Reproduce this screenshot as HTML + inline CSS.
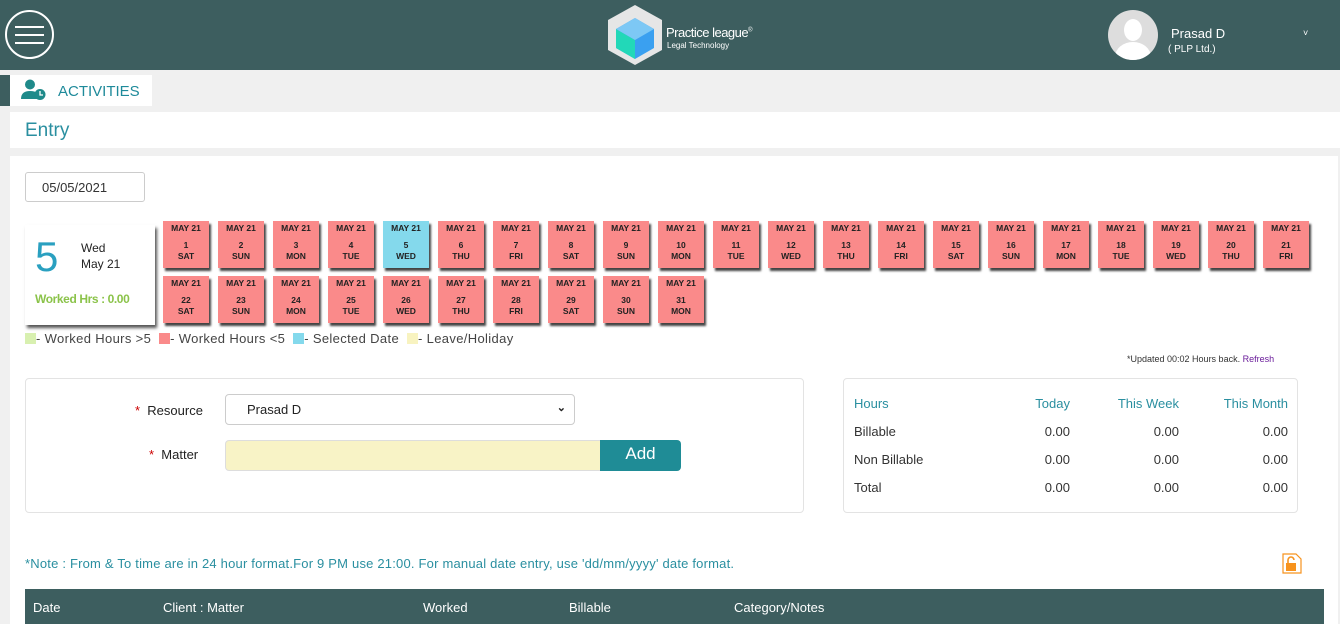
<!DOCTYPE html>
<html><head><style>
*{box-sizing:border-box;margin:0;padding:0}
body{width:1340px;height:624px;overflow:hidden;background:#f0f0f0;font-family:"Liberation Sans",sans-serif;position:relative}
.a{position:absolute}
.hdr{left:0;top:0;width:1340px;height:70px;background:#3d5e5f}
.tile{position:absolute;width:46px;height:47px;background:#fa8a8a;box-shadow:2px 3px 2px #444;text-align:center;font-size:8.5px;font-weight:bold;color:#222;line-height:11px;padding-top:2px}
.tile.sel{background:#84d9ec}
.tile b{display:block;margin-top:6px}
.lg{display:inline-block;width:11px;height:11px;vertical-align:-1px}
.st td{font-size:13px;color:#333;height:28px;padding:0}
.st th{font-size:13px;color:#2a8fa0;font-weight:normal;height:28px;padding:0}
</style></head><body>
<div class="a hdr"></div>
<div class="a" style="left:5px;top:10px;width:49px;height:49px;border:2px solid #fff;border-radius:50%"></div>
<div class="a" style="left:15px;top:26px;width:29px;height:2px;background:#fff;box-shadow:0 8px 0 #fff,0 16px 0 #fff"></div>
<svg class="a" style="left:606px;top:4px" width="58" height="62" viewBox="0 0 58 62"><polygon points="29,1 56,16 56,46 29,61 2,46 2,16" fill="#e6e6e6"/><polygon points="29,14 48,25 48,44 29,55 10,44 10,25" fill="#3aa0f0"/><polygon points="10,25 29,36 29,55 10,44" fill="#22d8b8"/><polygon points="29,14 48,25 29,36 10,25" fill="#7dc8f5"/></svg>
<div class="a" style="left:666px;top:25px;color:#fff;font-size:13px;letter-spacing:-0.5px">Practice league<sup style="font-size:6px">®</sup></div>
<div class="a" style="left:667px;top:41px;color:#fff;font-size:8px">Legal Technology</div>
<div class="a" style="left:1108px;top:10px;width:50px;height:50px;border-radius:50%;background:#ddd;overflow:hidden"><div class="a" style="left:16px;top:9px;width:18px;height:22px;border-radius:50%;background:#fff"></div><div class="a" style="left:7px;top:32px;width:36px;height:30px;border-radius:50%;background:#fff"></div></div>
<div class="a" style="left:1171px;top:26px;color:#fff;font-size:13px">Prasad D</div>
<div class="a" style="left:1168px;top:44px;color:#fff;font-size:10px">( PLP Ltd.)</div>
<div class="a" style="left:1303px;top:28px;color:#fff;font-size:9px">˅</div>

<div class="a" style="left:0;top:75px;width:10px;height:31px;background:#3d5e5f"></div>
<div class="a" style="left:10px;top:75px;width:142px;height:31px;background:#fff"></div>
<svg class="a" style="left:20px;top:79px" width="27" height="22" viewBox="0 0 27 22"><circle cx="10" cy="5.5" r="5" fill="#1f8a8a"/><path d="M1 20 Q1 12 10 12 Q15 12 17 14 L17 20Z" fill="#1f8a8a"/><circle cx="20" cy="15.5" r="5.5" fill="#1f8a8a"/><path d="M20 12v4h3" stroke="#fff" stroke-width="1.3" fill="none"/></svg>
<div class="a" style="left:58px;top:83px;color:#1e8a9a;font-size:15px">ACTIVITIES</div>
<div class="a" style="left:10px;top:112px;width:1330px;height:36px;background:#fff"></div>
<div class="a" style="left:25px;top:120px;color:#2a8fa0;font-size:19px">Entry</div>

<div class="a" style="left:10px;top:156px;width:1328px;height:468px;background:#fff"></div>
<div class="a" style="left:25px;top:172px;width:120px;height:30px;border:1px solid #ccc;border-radius:3px;font-size:13px;color:#333;padding:7px 0 0 16px">05/05/2021</div>
<div class="a" style="left:25px;top:225px;width:130px;height:100px;background:#fff;box-shadow:2px 3px 3px #555"></div>
<div class="a" style="left:35px;top:233px;color:#2aa0c0;font-size:42px">5</div>
<div class="a" style="left:81px;top:240px;font-size:12px;color:#222;line-height:16px">Wed<br>May 21</div>
<div class="a" style="left:35px;top:292px;font-size:12px;font-weight:bold;color:#8bc34a;letter-spacing:-0.4px">Worked Hrs : 0.00</div>
<div id="tiles"></div>
<div class="a" style="left:25px;top:331px;font-size:13px;color:#444;white-space:nowrap;letter-spacing:0.35px"><span class="lg" style="background:#d8f0b0"></span>- Worked Hours &gt;5 &nbsp;<span class="lg" style="background:#fa8a8a"></span>- Worked Hours &lt;5 &nbsp;<span class="lg" style="background:#84d9ec"></span>- Selected Date &nbsp;<span class="lg" style="background:#f8f3c0"></span>- Leave/Holiday</div>
<div class="a" style="left:1127px;top:354px;font-size:9px;color:#333">*Updated 00:02 Hours back. <span style="color:#6a1b9a">Refresh</span></div>

<div class="a" style="left:25px;top:378px;width:779px;height:135px;border:1px solid #e3e3e3;border-radius:4px"></div>
<div class="a" style="left:135px;top:403px;font-size:13px;color:#222"><span style="color:#c00">*</span>&nbsp; Resource</div>
<div class="a" style="left:225px;top:394px;width:350px;height:31px;border:1px solid #ccc;border-radius:4px;font-size:13px;color:#222;padding:7px 0 0 21px">Prasad D<span class="a" style="right:8px;top:6px;font-size:11px;font-weight:bold">⌄</span></div>
<div class="a" style="left:149px;top:447px;font-size:13px;color:#222"><span style="color:#c00">*</span>&nbsp; Matter</div>
<div class="a" style="left:225px;top:440px;width:376px;height:31px;background:#f8f3c6;border:1px solid #ddd;border-radius:4px 0 0 4px"></div>
<div class="a" style="left:600px;top:440px;width:81px;height:31px;background:#1f8c96;border-radius:0 4px 4px 0;color:#fff;font-size:17px;text-align:center;padding-top:4px">Add</div>

<div class="a" style="left:843px;top:378px;width:455px;height:135px;border:1px solid #e3e3e3;border-radius:4px"></div>
<table class="a st" style="left:854px;top:389px;width:434px;border-collapse:collapse;table-layout:fixed">
<colgroup><col style="width:108px"><col style="width:108px"><col style="width:109px"><col style="width:109px"></colgroup>
<tr><th style="text-align:left">Hours</th><th style="text-align:right">Today</th><th style="text-align:right">This Week</th><th style="text-align:right">This Month</th></tr>
<tr><td>Billable</td><td align="right">0.00</td><td align="right">0.00</td><td align="right">0.00</td></tr>
<tr><td>Non Billable</td><td align="right">0.00</td><td align="right">0.00</td><td align="right">0.00</td></tr>
<tr><td>Total</td><td align="right">0.00</td><td align="right">0.00</td><td align="right">0.00</td></tr>
</table>
<div class="a" style="left:25px;top:556px;font-size:13px;color:#2a8fa0;letter-spacing:0.2px;white-space:nowrap">*Note : From &amp; To time are in 24 hour format.For 9 PM use 21:00. For manual date entry, use 'dd/mm/yyyy' date format.</div>
<svg class="a" style="left:1282px;top:553px" width="20" height="21" viewBox="0 0 20 21"><path d="M1 1h13l5 5v14H1z" fill="#fff" stroke="#f7931e" stroke-width="1.2"/><rect x="4" y="10" width="10" height="8" fill="#f7931e"/><path d="M6 10V7a3 3 0 0 1 6 0" stroke="#f7931e" stroke-width="1.6" fill="none"/></svg>
<div class="a" style="left:25px;top:589px;width:1299px;height:35px;background:#3d5e5f;color:#fff;font-size:13px">
<span class="a" style="left:8px;top:11px">Date</span><span class="a" style="left:138px;top:11px">Client : Matter</span><span class="a" style="left:398px;top:11px">Worked</span><span class="a" style="left:544px;top:11px">Billable</span><span class="a" style="left:709px;top:11px">Category/Notes</span></div>
<script>
var d=["SAT","SUN","MON","TUE","WED","THU","FRI"],h="";
for(var i=1;i<=31;i++){var r=i<=21?0:1,c=r?i-22:i-1;h+='<div class="tile'+(i==5?' sel':'')+'" style="left:'+(163+c*55)+'px;top:'+(221+r*55)+'px">MAY 21<b>'+i+'</b>'+d[(i-1)%7]+'</div>';}
document.getElementById("tiles").innerHTML=h;
</script>
</body></html>
